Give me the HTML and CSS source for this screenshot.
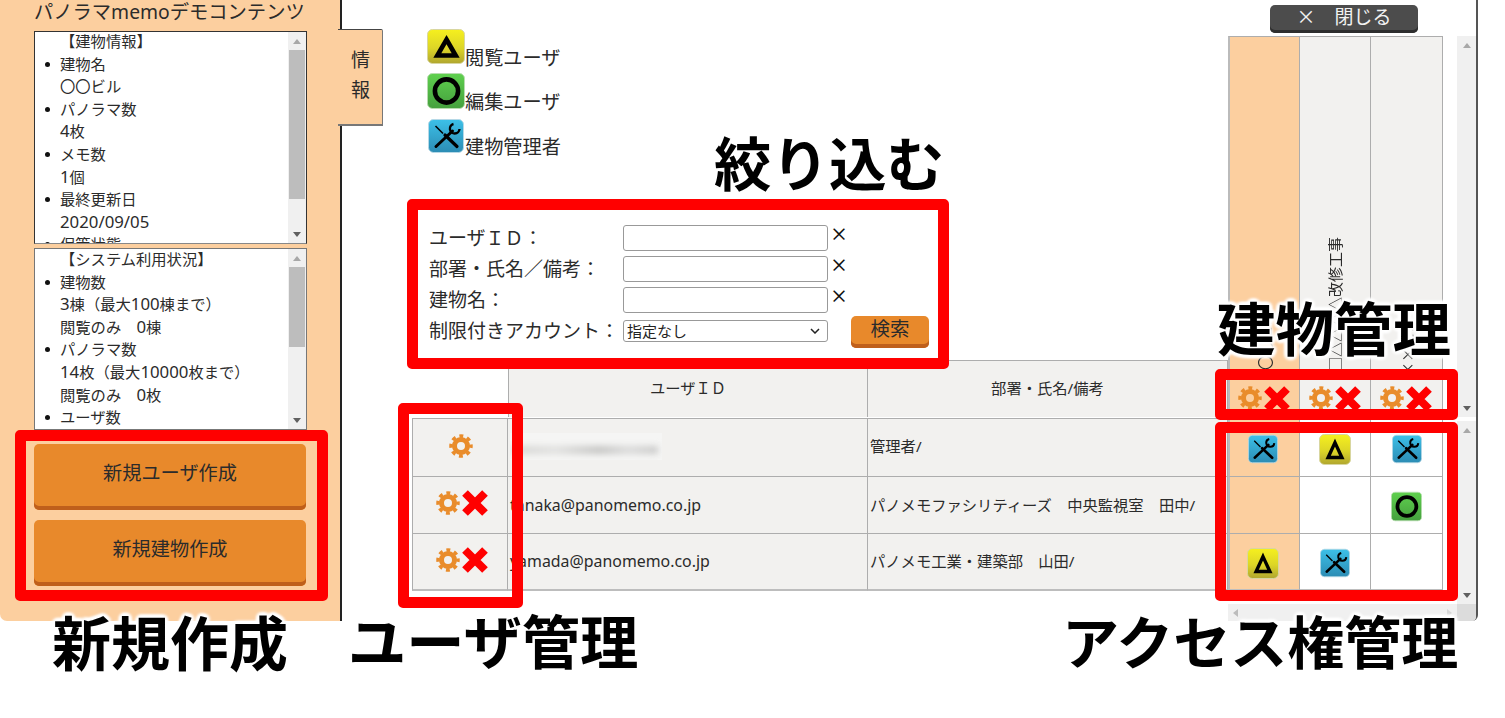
FILE: index.html
```html
<!DOCTYPE html>
<html lang="ja">
<head>
<meta charset="utf-8">
<title>パノラマmemo ユーザ管理</title>
<link rel="stylesheet" href="styles.css">
</head>
<body>
<svg class="defs" width="0" height="0" aria-hidden="true">
  <defs>
    <linearGradient id="gy" x1="0" y1="0" x2="0" y2="1"><stop offset="0" stop-color="#f6f01e"/><stop offset=".55" stop-color="#dcd527"/><stop offset="1" stop-color="#b0a62f"/></linearGradient>
    <linearGradient id="gg" x1="0" y1="0" x2="0" y2="1"><stop offset="0" stop-color="#5fd04e"/><stop offset="1" stop-color="#45a03e"/></linearGradient>
    <linearGradient id="gb" x1="0" y1="0" x2="0" y2="1"><stop offset="0" stop-color="#3cc0e8"/><stop offset="1" stop-color="#2c8cb4"/></linearGradient>
    <symbol id="i-view" viewBox="0 0 38 35"><rect x=".5" y=".5" width="37" height="34" rx="5" fill="url(#gy)" stroke="#d8d6a0" stroke-width="1"/><path d="M19.500 10.500 28.700 26.500H10.300Z" fill="none" stroke="#000" stroke-width="4.600"/></symbol>
    <symbol id="i-view-small" viewBox="0 0 32 31"><rect x=".5" y=".5" width="31" height="30" rx="5" fill="url(#gy)" stroke="#d8d6a0" stroke-width="1"/><path d="M16 8.650 22.900 23.550H9.100Z" fill="none" stroke="#000" stroke-width="3.400"/></symbol>
    <symbol id="i-edit" viewBox="0 0 38 36"><rect x=".5" y=".5" width="37" height="35" rx="5" fill="url(#gg)" stroke="#b8dcb0" stroke-width="1"/><circle cx="19.500" cy="18" r="11.600" fill="none" stroke="#000" stroke-width="4.600"/></symbol>
    <symbol id="i-admin" viewBox="0 0 36 34"><rect x=".5" y=".5" width="35" height="33" rx="5" fill="url(#gb)" stroke="#b6d8e6" stroke-width="1"/><path d="M7.500 7 15 14.500" stroke="#000" stroke-width="1.600" fill="none"/><path d="M17 16 29 27.500" stroke="#000" stroke-width="3.200" stroke-linecap="round" fill="none"/><path d="M8 27.500 24.500 12" stroke="#000" stroke-width="3" stroke-linecap="round" fill="none"/><path d="M31.500 10A4.800 4.800 0 1 1 25.500 5" stroke="#000" stroke-width="2.400" fill="none"/></symbol>
    <symbol id="i-gear" viewBox="0 0 24 24"><circle cx="12" cy="12" r="6.500" fill="none" stroke="#e98c2b" stroke-width="5"/><circle cx="12" cy="12" r="10" fill="none" stroke="#e98c2b" stroke-width="3.500" stroke-dasharray="3.900 3.954" stroke-dashoffset="1.950"/></symbol>
    <symbol id="i-x" viewBox="0 0 28 28"><path d="M4 4 24 24M24 4 4 24" stroke="#f00" stroke-width="8" fill="none"/></symbol>
  </defs>
</svg>

<div class="page">
  <div class="app">
    <aside class="sidebar">
      <h1 class="sidebar-title">パノラマmemoデモコンテンツ</h1>
      <section class="infobox infobox-a">
        <div class="infobox-text">
          <p class="infobox-head">【建物情報】</p>
          <ul>
            <li>建物名<br>〇〇ビル</li>
            <li>パノラマ数<br><span class="num">4</span>枚</li>
            <li>メモ数<br><span class="num">1</span>個</li>
            <li>最終更新日<br><span class="num">2020/09/05</span></li>
            <li>保管状態</li>
          </ul>
        </div>
        <div class="vbar">
          <span class="arrow-up"></span>
          <div class="vbar-track"><div class="vbar-thumb thumb-a"></div></div>
          <span class="arrow-down"></span>
        </div>
      </section>
      <section class="infobox infobox-b">
        <div class="infobox-text">
          <p class="infobox-head">【システム利用状況】</p>
          <ul>
            <li>建物数<br><span class="num">3</span>棟（最大<span class="num">100</span>棟まで）<br>閲覧のみ　<span class="num">0</span>棟</li>
            <li>パノラマ数<br><span class="num">14</span>枚（最大<span class="num">10000</span>枚まで）<br>閲覧のみ　<span class="num">0</span>枚</li>
            <li>ユーザ数</li>
          </ul>
        </div>
        <div class="vbar">
          <span class="arrow-up"></span>
          <div class="vbar-track"><div class="vbar-thumb thumb-b"></div></div>
          <span class="arrow-down"></span>
        </div>
      </section>
      <div class="create-actions">
        <button class="btn-orange btn-create" type="button">新規ユーザ作成</button>
        <button class="btn-orange btn-create" type="button">新規建物作成</button>
      </div>
      <div class="tab"><span>情</span><span>報</span></div>
    </aside>

    <main class="main">
      <div class="filters">
        <div class="legend">
          <div class="legend-row"><svg class="legend-icon li-view"><use href="#i-view"/></svg><span>閲覧ユーザ</span></div>
          <div class="legend-row"><svg class="legend-icon li-edit"><use href="#i-edit"/></svg><span>編集ユーザ</span></div>
          <div class="legend-row"><svg class="legend-icon li-admin"><use href="#i-admin"/></svg><span>建物管理者</span></div>
        </div>
        <form class="search">
          <label class="search-label">ユーザＩＤ：</label><input class="search-input" type="text"><span class="clear">×</span><span></span>
          <label class="search-label">部署・氏名／備考：</label><input class="search-input" type="text"><span class="clear">×</span><span></span>
          <label class="search-label">建物名：</label><input class="search-input" type="text"><span class="clear">×</span><span></span>
          <label class="search-label">制限付きアカウント：</label><select class="search-select"><option>指定なし</option></select><span></span><button class="btn-orange btn-search" type="button">検索</button>
        </form>
      </div>

      <div class="close-wrap"><button class="btn-close" type="button">×　閉じる</button></div>

      <div class="bhead bhead-1 is-mine">
        <span class="bname bname-1">〇〇ビル</span>
        <div class="bactions"><svg class="gear"><use href="#i-gear"/></svg><svg class="cross"><use href="#i-x"/></svg></div>
      </div>
      <div class="bhead bhead-2">
        <span class="bname bname-2">□△△△△改修工事</span>
        <div class="bactions"><svg class="gear"><use href="#i-gear"/></svg><svg class="cross"><use href="#i-x"/></svg></div>
      </div>
      <div class="bhead bhead-3">
        <span class="bname bname-3">××ビル</span>
        <div class="bactions"><svg class="gear"><use href="#i-gear"/></svg><svg class="cross"><use href="#i-x"/></svg></div>
      </div>

      <div class="vbar vbar-top">
        <span class="arrow-up"></span><div class="vbar-track"></div><span class="arrow-down"></span>
      </div>

      <div class="thead thead-id">ユーザＩＤ</div>
      <div class="thead thead-dept">部署・氏名/備考</div>

      <div class="opcell opcell-single r1"><svg class="gear"><use href="#i-gear"/></svg></div>
      <div class="idcell r1"><div class="blurred"><div class="blurred-ink"></div></div></div>
      <div class="deptcell r1">管理者/</div>
      <div class="pcell r1 c1 is-mine"><svg class="picon pi-admin"><use href="#i-admin"/></svg></div>
      <div class="pcell r1 c2"><svg class="picon pi-view"><use href="#i-view-small"/></svg></div>
      <div class="pcell r1 c3"><svg class="picon pi-admin"><use href="#i-admin"/></svg></div>

      <div class="opcell r2"><svg class="gear"><use href="#i-gear"/></svg><svg class="cross"><use href="#i-x"/></svg></div>
      <div class="idcell r2">tanaka@panomemo.co.jp</div>
      <div class="deptcell r2">パノメモファシリティーズ　中央監視室　田中/</div>
      <div class="pcell r2 c1 is-mine"></div>
      <div class="pcell r2 c2"></div>
      <div class="pcell r2 c3"><svg class="picon pi-edit"><use href="#i-edit"/></svg></div>

      <div class="opcell r3"><svg class="gear"><use href="#i-gear"/></svg><svg class="cross"><use href="#i-x"/></svg></div>
      <div class="idcell r3">yamada@panomemo.co.jp</div>
      <div class="deptcell r3">パノメモ工業・建築部　山田/</div>
      <div class="pcell r3 c1 is-mine"><svg class="picon pi-view"><use href="#i-view-small"/></svg></div>
      <div class="pcell r3 c2"><svg class="picon pi-admin"><use href="#i-admin"/></svg></div>
      <div class="pcell r3 c3"></div>

      <div class="vbar vbar-body">
        <span class="arrow-up"></span><div class="vbar-track"></div><span class="arrow-down"></span>
      </div>
      <div class="hbar"><span class="arrow-left"></span><span class="arrow-right"></span></div>
      <div class="hbar-corner"></div>
    </main>
  </div>

  <div class="frame frame-create"></div>
  <div class="frame frame-filter"></div>
  <div class="frame frame-users"></div>
  <div class="frame frame-buildings"></div>
  <div class="frame frame-access"></div>

  <div class="callout co-filter">絞り込む</div>
  <div class="callout co-building">建物管理</div>
  <div class="callout co-create">新規作成</div>
  <div class="callout co-users">ユーザ管理</div>
  <div class="callout co-access">アクセス権管理</div>
</div>
</body>
</html>
```
FILE: styles.css
```css
* { box-sizing: border-box; }
html, body { margin: 0; padding: 0; background: #fff; }
body {
  font-family: "Noto Sans", "Noto Sans CJK JP", sans-serif;
  color: #2b2b2b;
  overflow: hidden;
}
.defs { position: absolute; }
.page { position: relative; width: 1505px; height: 718px; overflow: hidden; }
.app { display: flex; height: 621px; }

/* Sidebar */
.sidebar {
  position: relative;
  width: 342px;
  flex: none;
  background: #fccf9f;
  border-right: 2px solid #222;
  border-bottom-left-radius: 7px;
  padding-left: 34px;
  display: flex;
  flex-direction: column;
}
.sidebar-title {
  margin: 0;
  height: 31px;
  font-size: 19.300px;
  font-weight: 400;
  line-height: 24px;
  white-space: nowrap;
}
.infobox {
  width: 273px;
  background: #fff;
  border: 1px solid #333;
  border-bottom-color: #888;
  display: flex;
  overflow: hidden;
}
.infobox-a { height: 213px; }
.infobox-b { height: 182px; margin-top: 4px; border-color: #777; }
.infobox-text {
  flex: 1;
  min-width: 0;
  font-size: 15.300px;
  line-height: 22.600px;
  overflow: hidden;
}
.infobox-head { margin: -2px 0 0 25px; white-space: nowrap; }
.infobox-b .infobox-head { margin-top: -1px; }
.infobox-text ul { margin: 0; padding: 0 0 0 25px; list-style: none; }
.infobox-text li { position: relative; white-space: nowrap; }
.infobox-text li::before {
  content: "";
  position: absolute;
  left: -15px;
  top: 9px;
  width: 5px;
  height: 5px;
  border-radius: 50%;
  background: #111;
}
.num { font-size: 16.800px; }

.vbar {
  width: 18px;
  flex: none;
  background: #f0f0f0;
  display: flex;
  flex-direction: column;
  align-items: center;
}
.vbar-track { flex: 1; width: 100%; padding: 0 1px; }
.vbar-thumb { background: #bdbdbd; }
.thumb-a { height: 149px; }
.thumb-b { height: 80px; }
.arrow-up, .arrow-down {
  flex: none;
  width: 0; height: 0;
  margin: 7px 0 6px;
  border-left: 4px solid transparent;
  border-right: 4px solid transparent;
}
.arrow-up { border-bottom: 5px solid #a8a8a8; }
.arrow-down { border-top: 5px solid #606060; }

.create-actions {
  margin-top: 14px;
  width: 272px;
  display: flex;
  flex-direction: column;
  gap: 10px;
}
.btn-orange {
  border: 0;
  background: #e8892b;
  color: #2b2b2b;
  font-family: inherit;
  border-radius: 5px;
  box-shadow: inset 0 -4px 0 #bf5f1b;
  padding: 0 0 4px;
}
.btn-create { height: 66px; font-size: 19.200px; padding-bottom: 10px; }

.tab {
  position: absolute;
  left: 338px;
  top: 29px;
  width: 45px;
  height: 97px;
  background: #fccf9f;
  border: 1px solid #444;
  border-left: 0;
  border-bottom-width: 2px;
  border-bottom-color: #777;
  border-right-color: #777;
  border-radius: 0 2px 0 0;
  padding: 18px 12px 0 0;
  display: flex;
  flex-direction: column;
  align-items: flex-end;
  gap: 6px;
  font-size: 19px;
  line-height: 24px;
}

/* Main grid */
.main {
  flex: none;
  width: 1136px;
  height: 621px;
  border-right: 2px solid #555;
  border-bottom-right-radius: 6px;
  display: grid;
  grid-template-columns: 70px 96px 360px 360px 72px 71px 72px 14px 19px;
  grid-template-rows: 36px 324px 57px 1px 58px 57px 58px 13px 17px;
}
.filters {
  grid-column: 1 / 5;
  grid-row: 1 / 3;
  padding: 24px 0 0 85px;
}
.legend-row {
  height: 44.500px;
  display: flex;
  align-items: flex-end;
  font-size: 19.200px;
  line-height: 22px;
}
.legend-icon { display: block; margin-bottom: 5px; flex: none; }
.li-view { width: 38px; height: 35px; }
.li-edit { width: 38px; height: 36px; margin-bottom: 4px; }
.li-admin { width: 36px; height: 34px; margin-left: 1px; margin-right: 1px; }

.search {
  margin: 67px 0 0 2px;
  display: grid;
  grid-template-columns: 194px 205px 23px 77px;
  grid-auto-rows: 31.300px;
  align-items: start;
  font-size: 19px;
}
.search-label { line-height: 24px; margin-top: 1px; white-space: nowrap; }
.search-input {
  width: 205px;
  height: 26px;
  border: 1px solid #999;
  border-radius: 3px;
  background: #fff;
  padding: 0 4px;
}
.search-select {
  appearance: none;
  width: 205px;
  height: 22px;
  margin-top: 2px;
  border: 1px solid #999;
  border-radius: 3px;
  background: #fff url("data:image/svg+xml,%3Csvg xmlns='http://www.w3.org/2000/svg' width='10' height='6'%3E%3Cpath d='M1 1l4 4 4-4' fill='none' stroke='%23222' stroke-width='1.500'/%3E%3C/svg%3E") no-repeat right 7px center;
  padding: 0 3px;
  font-family: inherit;
  font-size: 15px;
  line-height: 20px;
  color: #222;
}
.clear {
  font-family: "Noto Sans CJK JP", sans-serif;
  font-size: 18px;
  font-weight: 500;
  line-height: 16px;
  padding-left: 2px;
  color: #111;
}
.btn-search {
  width: 78px;
  height: 32px;
  margin-top: -2px;
  font-size: 19.500px;
  line-height: 24px;
  padding-bottom: 6px;
}

.close-wrap { grid-column: 5 / 8; grid-row: 1; padding: 5px 0 0 42px; }
.btn-close {
  display: block;
  width: 148px;
  height: 28px;
  border: 0;
  border-radius: 5px;
  background: #4c4c4c;
  box-shadow: inset 0 -3px 0 #2e2e2e;
  color: #f2f2f2;
  font-family: "Noto Sans CJK JP", sans-serif;
  font-size: 19px;
  line-height: 22px;
  padding: 0 0 6px;
}

.bhead {
  grid-row: 2 / 4;
  background: #f2f1ef;
  border: 1px solid #adadad;
  border-left: 0;
  border-bottom: 0;
  display: flex;
  flex-direction: column;
  align-items: center;
  justify-content: flex-end;
  overflow: hidden;
}
.bhead-1 { grid-column: 5; border-left: 2px solid #bbb; }
.bhead-2 { grid-column: 6; }
.bhead-3 { grid-column: 7; }
.is-mine { background: #fccf9f; }
.bname {
  writing-mode: vertical-rl;
  text-orientation: sideways;
  transform: rotate(180deg);
  font-family: "Noto Sans CJK JP", sans-serif;
  font-size: 15px;
  line-height: 16px;
  white-space: nowrap;
}
.bname-1 { margin-bottom: 9.500px; }
.bname-2 { margin-bottom: 8px; }
.bname-3 { margin-bottom: 2.500px; }
.bactions {
  height: 37px;
  display: flex;
  align-items: flex-start;
  justify-content: center;
  flex: none;
  padding-top: 6px;
}
.gear { width: 24px; height: 24px; flex: none; display: block; }
.cross { width: 28px; height: 28px; flex: none; display: block; margin-left: 1px; }
.bactions .cross { margin-top: -1px; }

.vbar-top { grid-column: 9; grid-row: 2 / 5; width: 19px; height: 381px; }
.vbar-body { grid-column: 9; grid-row: 5 / 9; width: 19px; margin-top: 3px; }

.thead {
  grid-row: 3;
  background: #f2f1ef;
  border-top: 1px solid #adadad;
  border-right: 1px solid #adadad;
  display: flex;
  align-items: center;
  justify-content: center;
  font-size: 15.300px;
  padding-bottom: 5px;
}
.thead-id { grid-column: 3; border-left: 1px solid #adadad; }
.thead-dept { grid-column: 4; }

.r1 { grid-row: 5; }
.r2 { grid-row: 6; }
.r3 { grid-row: 7; }
.c1 { grid-column: 5; border-left: 2px solid #bbb; }
.c2 { grid-column: 6; }
.c3 { grid-column: 7; }

.opcell, .idcell, .deptcell, .pcell {
  border-top: 1px solid #adadad;
  border-right: 1px solid #adadad;
  display: flex;
  align-items: center;
}
.r3.opcell, .r3.idcell, .r3.deptcell, .r3.pcell { border-bottom: 2px solid #bdbdbd; }
.opcell {
  grid-column: 2;
  justify-content: center;
  background: #f2f1ef;
  border-left: 1px solid #adadad;
  padding: 0 0 4px 5px;
}
.opcell-single { padding-left: 2px; }
.idcell {
  grid-column: 3;
  background: #f2f1ef;
  font-size: 15.900px;
  padding: 0 0 1px 2px;
  white-space: nowrap;
}
.deptcell {
  grid-column: 4;
  background: #f2f1ef;
  font-size: 15.300px;
  padding: 0 0 3px 2px;
  white-space: nowrap;
}
.deptcell.r1 { padding-bottom: 5px; }
.pcell { background: #fff; justify-content: center; padding-top: 3px; }
.pcell.is-mine { background: #fccf9f; }
.picon { display: block; flex: none; }
.c1 .picon { margin-right: 3px; }
.pi-admin { width: 30px; height: 30px; }
.pi-view { width: 32px; height: 31px; }
.pi-edit { width: 31px; height: 31px; }

.blurred {
  width: 152px;
  height: 27px;
  margin-bottom: 2px;
  background: #f5f5f4;
  overflow: hidden;
  display: flex;
  align-items: flex-end;
}
.blurred-ink {
  width: 146px;
  height: 8px;
  margin: 0 0 6px 2px;
  background: linear-gradient(90deg, #d4d4d3, #e0e0df 30%, #c4c4c3 60%, #dadada 80%, #cacac9);
  filter: blur(3px);
}

.hbar {
  grid-column: 5 / 9;
  grid-row: 9;
  background: #f0f0f0;
  display: flex;
  align-items: center;
  justify-content: space-between;
  padding: 0 5px;
}
.arrow-left, .arrow-right {
  width: 0; height: 0;
  border-top: 4px solid transparent;
  border-bottom: 4px solid transparent;
}
.arrow-left { border-right: 5px solid #bcbcbc; }
.arrow-right { border-left: 5px solid #d6d6d6; }
.hbar-corner { grid-column: 9; grid-row: 9; background: #dcdcdc; border-bottom-right-radius: 4px; }

/* Annotation overlay */
.frame {
  position: absolute;
  border: 11px solid #f00;
  border-radius: 5px;
  z-index: 2;
}
.frame-create { left: 15px; top: 430px; width: 313px; height: 171px; }
.frame-filter { left: 407px; top: 199px; width: 542px; height: 170px; }
.frame-users { left: 398px; top: 403px; width: 125px; height: 205px; }
.frame-buildings { left: 1215px; top: 369px; width: 243px; height: 51px; }
.frame-access { left: 1215px; top: 422px; width: 243px; height: 179px; }

.callout {
  position: absolute;
  z-index: 3;
  font-family: "Noto Sans CJK JP", sans-serif;
  font-weight: 700;
  color: #000;
  white-space: nowrap;
  line-height: 70px;
  text-shadow: 0 0 4px #fff, 3px 0 3px #fff, -3px 0 3px #fff, 0 3px 3px #fff, 0 -3px 3px #fff, 2px 2px 3px #fff, -2px -2px 3px #fff, 2px -2px 3px #fff, -2px 2px 3px #fff;
}
.co-filter { left: 714px; top: 126px; font-size: 57.500px; }
.co-building { left: 1217px; top: 291px; font-size: 58.500px; }
.co-create { left: 52px; top: 606px; font-size: 59px; }
.co-users { left: 348px; top: 604px; font-size: 58.300px; }
.co-access { left: 1062px; top: 604px; font-size: 57px; }
```
